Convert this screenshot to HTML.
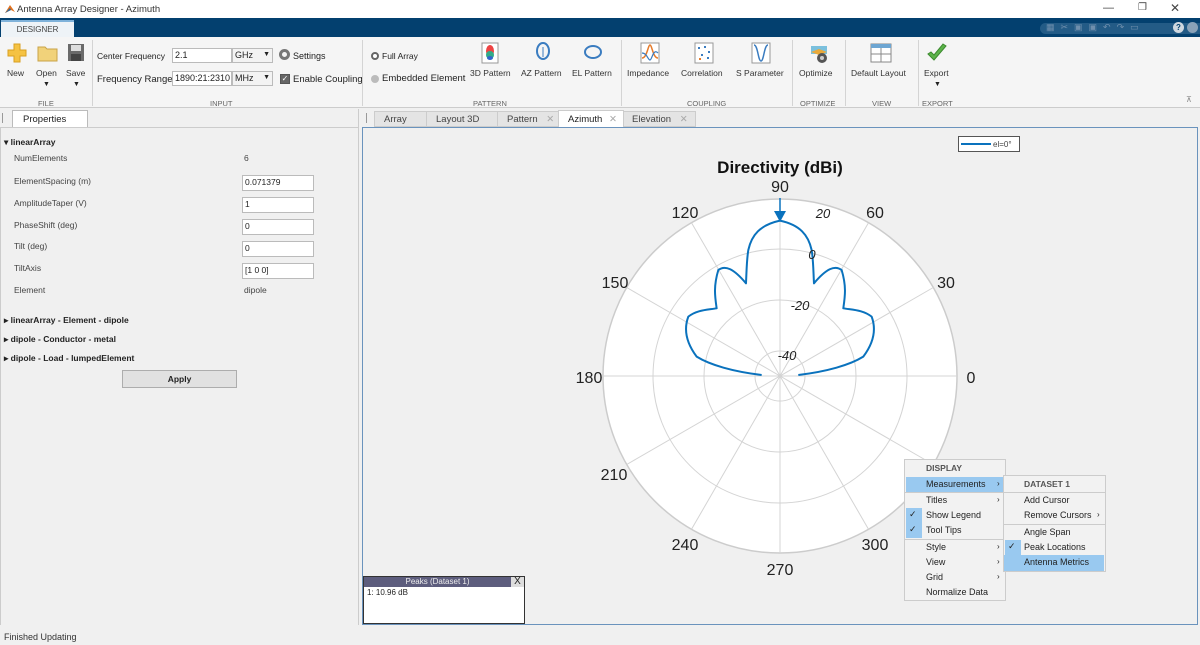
<!DOCTYPE html>
<html><head><meta charset="utf-8"><style>
*{box-sizing:border-box;margin:0;padding:0}
body{width:1200px;height:645px;overflow:hidden;background:#f0f0f0;font-family:"Liberation Sans",sans-serif;font-size:9px;color:#222;position:relative}
.a{position:absolute;white-space:nowrap}
.lbl{font-size:7.5px;color:#666;text-align:center}
.inp{position:absolute;background:#fff;border:1px solid #bbb;font-size:9px;padding:1px 2px;height:15px}
.sep{position:absolute;top:40px;width:1px;height:66px;background:#d4d4d4}
.tb{font-size:8.5px;color:#333;text-align:center}
</style></head><body>
<div class="a" style="left:0;top:0;width:1200px;height:19px;background:#fff"></div>
<svg class="a" style="left:4px;top:3px" width="12" height="12"><path d="M1 10 L6 2 L11 9 L7 7 Z" fill="#e2711d"/><path d="M1 10 L6 5 L7 7Z" fill="#2c6aa0"/></svg>
<div class="a" style="left:17px;top:4px;font-size:9.5px;color:#333">Antenna Array Designer - Azimuth</div>
<div class="a" style="left:1103px;top:2px;font-size:11px;color:#444">—</div>
<div class="a" style="left:1138px;top:2px;font-size:10px;color:#444">❐</div>
<div class="a" style="left:1170px;top:1px;font-size:12px;color:#444">✕</div>
<div class="a" style="left:0;top:18px;width:1200px;height:19px;background:#03406f"></div>
<div class="a" style="left:1px;top:20px;width:73px;height:18px;background:#eef3f7;border-top:2px solid #7fb2da;font-size:8px;color:#444;text-align:center;line-height:15px">DESIGNER</div>
<div class="a" style="left:1040px;top:23px;width:160px;height:11px;background:#235b86;border-radius:6px 0 0 6px"></div>
<div class="a" style="left:1046px;top:22px;font-size:9px;color:#6f8fad;letter-spacing:6px">▦✂▣▣↶↷▭</div>
<div class="a" style="left:1173px;top:22px;width:11px;height:11px;border-radius:50%;background:#cfd8e0;font-size:8px;text-align:center;line-height:11px;color:#03406f;font-weight:bold">?</div>
<div class="a" style="left:1187px;top:22px;width:11px;height:11px;border-radius:50%;background:#8aa2b8"></div>
<div class="a" style="left:0;top:37px;width:1200px;height:71px;background:#f5f5f5;border-bottom:1px solid #ccc"></div>
<svg class="a" style="left:7px;top:43px" width="20" height="20"><path d="M7 1h6v6h6v6h-6v6H7v-6H1V7h6z" fill="#f5c242" stroke="#d9a020"/></svg>
<svg class="a" style="left:37px;top:44px" width="22" height="18"><path d="M1 3h7l2 2h10v12H1z" fill="#f1d27a" stroke="#c9a347"/></svg>
<svg class="a" style="left:67px;top:43px" width="18" height="19"><rect x="1" y="1" width="16" height="17" fill="#6a6a6a"/><rect x="4" y="2" width="10" height="6" fill="#ddd"/><rect x="4" y="11" width="10" height="7" fill="#444"/></svg>
<div class="a tb" style="left:7px;top:68px">New</div>
<div class="a tb" style="left:36px;top:68px">Open</div>
<div class="a tb" style="left:66px;top:68px">Save</div>
<div class="a" style="left:43px;top:81px;font-size:7px">▼</div>
<div class="a" style="left:73px;top:81px;font-size:7px">▼</div>
<div class="a lbl" style="left:38px;top:99px">FILE</div>
<div class="sep" style="left:92px"></div>
<div class="a" style="left:97px;top:51px;font-size:8.5px">Center Frequency</div>
<div class="inp" style="left:172px;top:48px;width:60px">2.1</div>
<div class="inp" style="left:232px;top:48px;width:41px;background:#f3f3f3">GHz <span style="float:right;font-size:7px;margin-top:1px">▼</span></div>
<div class="a" style="left:279px;top:49px;width:11px;height:11px;border-radius:50%;border:3px solid #777"></div>
<div class="a" style="left:293px;top:51px;font-size:9px">Settings</div>
<div class="a" style="left:97px;top:74px;font-size:9.5px">Frequency Range</div>
<div class="inp" style="left:172px;top:71px;width:60px">1890:21:2310</div>
<div class="inp" style="left:232px;top:71px;width:41px;background:#f3f3f3">MHz <span style="float:right;font-size:7px;margin-top:1px">▼</span></div>
<div class="a" style="left:280px;top:74px;width:10px;height:10px;background:#666;border:1px solid #555;color:#fff;font-size:8px;line-height:8px;text-align:center">✓</div>
<div class="a" style="left:293px;top:74px;font-size:9.5px">Enable Coupling</div>
<div class="a lbl" style="left:210px;top:99px">INPUT</div>
<div class="sep" style="left:362px"></div>
<div class="a" style="left:371px;top:52px;width:8px;height:8px;border-radius:50%;border:2px solid #666;background:#fff"></div>
<div class="a" style="left:382px;top:51px;font-size:8.5px">Full Array</div>
<div class="a" style="left:371px;top:75px;width:8px;height:8px;border-radius:50%;background:#bbb"></div>
<div class="a" style="left:382px;top:73px;font-size:9.5px">Embedded Element</div>
<svg class="a" style="left:481px;top:42px" width="18" height="22"><rect x="1" y="1" width="16" height="20" fill="#fff" stroke="#999"/><ellipse cx="9" cy="9" rx="4" ry="6" fill="#e44"/><ellipse cx="9" cy="13" rx="4" ry="4" fill="#3a8"/><ellipse cx="9" cy="16" rx="3" ry="2" fill="#36c"/></svg>
<svg class="a" style="left:533px;top:42px" width="20" height="22"><ellipse cx="10" cy="9" rx="6" ry="8" fill="none" stroke="#3a7cc0" stroke-width="2"/><path d="M10 5 v10" stroke="#3a7cc0"/></svg>
<svg class="a" style="left:582px;top:42px" width="22" height="22"><ellipse cx="11" cy="10" rx="8" ry="6" fill="none" stroke="#3a7cc0" stroke-width="2"/></svg>
<div class="a tb" style="left:470px;top:68px">3D Pattern</div>
<div class="a tb" style="left:521px;top:68px">AZ Pattern</div>
<div class="a tb" style="left:572px;top:68px">EL Pattern</div>
<div class="a lbl" style="left:473px;top:99px">PATTERN</div>
<div class="sep" style="left:621px"></div>
<svg class="a" style="left:640px;top:42px" width="20" height="22"><rect x="1" y="1" width="18" height="20" fill="#fff" stroke="#999"/><path d="M2 16 C7 16 8 3 10 3 S13 16 18 16" stroke="#e57a2a" fill="none" stroke-width="1.5"/><path d="M2 11 C7 11 8 18 10 18 S13 6 18 11" stroke="#3a7cc0" fill="none" stroke-width="1.2"/></svg>
<svg class="a" style="left:694px;top:42px" width="20" height="22"><rect x="1" y="1" width="18" height="20" fill="#fff" stroke="#999"/><g fill="#3a7cc0"><rect x="4" y="5" width="2" height="2"/><rect x="10" y="4" width="2" height="2"/><rect x="14" y="9" width="2" height="2"/><rect x="7" y="12" width="2" height="2"/><rect x="13" y="15" width="2" height="2"/></g><rect x="5" y="16" width="2" height="2" fill="#e57a2a"/></svg>
<svg class="a" style="left:751px;top:42px" width="20" height="22"><rect x="1" y="1" width="18" height="20" fill="#fff" stroke="#999"/><path d="M3 3 C7 3 7 19 10 19 S13 3 17 3" stroke="#3a7cc0" fill="none" stroke-width="1.5"/></svg>
<div class="a tb" style="left:627px;top:68px">Impedance</div>
<div class="a tb" style="left:681px;top:68px">Correlation</div>
<div class="a tb" style="left:736px;top:68px">S Parameter</div>
<div class="a lbl" style="left:687px;top:99px">COUPLING</div>
<div class="sep" style="left:792px"></div>
<svg class="a" style="left:808px;top:43px" width="22" height="22"><rect x="3" y="3" width="16" height="8" fill="#7bc0dd"/><path d="M3 9 l8 -3 l8 3 l-8 3z" fill="#e9a93a"/><circle cx="14" cy="15" r="5" fill="#555"/><circle cx="14" cy="15" r="2" fill="#ccc"/></svg>
<div class="a tb" style="left:799px;top:68px">Optimize</div>
<div class="a lbl" style="left:800px;top:99px">OPTIMIZE</div>
<div class="sep" style="left:845px"></div>
<svg class="a" style="left:870px;top:43px" width="22" height="20"><rect x="1" y="1" width="20" height="18" fill="#fff" stroke="#888"/><rect x="1" y="1" width="20" height="4" fill="#6ea6d2"/><path d="M1 11h20M11 5v14" stroke="#888"/></svg>
<div class="a tb" style="left:851px;top:68px">Default Layout</div>
<div class="a lbl" style="left:872px;top:99px">VIEW</div>
<div class="sep" style="left:918px"></div>
<svg class="a" style="left:926px;top:43px" width="22" height="20"><path d="M2 11 l6 6 l12 -14 l-3 -2 l-9 11 l-3 -3z" fill="#5cb34a" stroke="#3c8a2f"/></svg>
<div class="a tb" style="left:924px;top:68px">Export</div>
<div class="a" style="left:934px;top:81px;font-size:7px">▼</div>
<div class="a lbl" style="left:922px;top:99px">EXPORT</div>
<div class="a" style="left:1186px;top:95px;font-size:8px;color:#888">⊼</div>
<div class="a" style="left:0;top:109px;width:359px;height:516px;background:#f0f0f0;border-right:1px solid #ccc"></div>
<div class="a" style="left:2px;top:113px;width:1px;height:10px;background:#999"></div>
<div class="a" style="left:12px;top:110px;width:76px;height:18px;background:#fff;border:1px solid #bbb;border-bottom:none;font-size:9.5px;padding:3px 0 0 10px">Properties</div>
<div class="a" style="left:0;top:127px;width:358px;height:498px;background:#f0f0f0;border-top:1px solid #ccc;border-left:1px solid #ccc"></div>
<div class="a" style="left:4px;top:137px;font-size:8.5px;font-weight:bold">▾ linearArray</div>
<div class="a" style="left:14px;top:153px;font-size:8.5px;color:#444">NumElements</div>
<div class="a" style="left:244px;top:153px;font-size:8.5px;color:#444">6</div>
<div class="a" style="left:14px;top:176px;font-size:8.5px;color:#444">ElementSpacing (m)</div>
<div class="a" style="left:14px;top:198px;font-size:8.5px;color:#444">AmplitudeTaper (V)</div>
<div class="a" style="left:14px;top:220px;font-size:8.5px;color:#444">PhaseShift (deg)</div>
<div class="a" style="left:14px;top:241px;font-size:8.5px;color:#444">Tilt (deg)</div>
<div class="a" style="left:14px;top:263px;font-size:8.5px;color:#444">TiltAxis</div>
<div class="a" style="left:14px;top:285px;font-size:8.5px;color:#444">Element</div>
<div class="a" style="left:244px;top:285px;font-size:8.5px;color:#444">dipole</div>
<div class="inp" style="left:242px;top:175px;width:72px;height:16px;font-size:8.5px">0.071379</div>
<div class="inp" style="left:242px;top:197px;width:72px;height:16px;font-size:8.5px">1</div>
<div class="inp" style="left:242px;top:219px;width:72px;height:16px;font-size:8.5px">0</div>
<div class="inp" style="left:242px;top:241px;width:72px;height:16px;font-size:8.5px">0</div>
<div class="inp" style="left:242px;top:263px;width:72px;height:16px;font-size:8.5px">[1 0 0]</div>
<div class="a" style="left:4px;top:315px;font-size:8.5px;font-weight:bold">▸ linearArray - Element - dipole</div>
<div class="a" style="left:4px;top:334px;font-size:8.5px;font-weight:bold">▸ dipole - Conductor - metal</div>
<div class="a" style="left:4px;top:353px;font-size:8.5px;font-weight:bold">▸ dipole - Load - lumpedElement</div>
<div class="a" style="left:122px;top:370px;width:115px;height:18px;background:#e1e1e1;border:1px solid #adadad;font-size:8.5px;font-weight:bold;text-align:center;line-height:16px">Apply</div>
<div class="a" style="left:366px;top:113px;width:1px;height:10px;background:#999"></div>
<div class="a" style="left:374px;top:111px;width:322px;height:16px;background:#e4e4e4;border:1px solid #ccc"></div>
<div class="a" style="left:384px;top:114px;font-size:9.5px;color:#444">Array</div>
<div class="a" style="left:426px;top:111px;width:1px;height:16px;background:#ccc"></div>
<div class="a" style="left:436px;top:114px;font-size:9.5px;color:#444">Layout 3D</div>
<div class="a" style="left:497px;top:111px;width:1px;height:16px;background:#ccc"></div>
<div class="a" style="left:507px;top:114px;font-size:9.5px;color:#444">Pattern <span style="color:#aaa;margin-left:6px">✕</span></div>
<div class="a" style="left:558px;top:110px;width:66px;height:18px;background:#fff;border:1px solid #ccc;border-bottom:none;font-size:9.5px;padding:3px 0 0 9px">Azimuth <span style="color:#aaa;margin-left:4px">✕</span></div>
<div class="a" style="left:632px;top:114px;font-size:9.5px;color:#444">Elevation <span style="color:#aaa;margin-left:6px">✕</span></div>
<div class="a" style="left:362px;top:127px;width:836px;height:498px;background:#f0f0f0;border:1px solid #6a93bd"></div>
<svg class="a" style="left:0;top:0" width="1200" height="645">
<g transform="translate(780,376)">
<circle r="177" fill="#fff" stroke="#ccc" stroke-width="1.5"/>
<g fill="none" stroke="#d4d4d4"><circle r="127"/><circle r="76"/><circle r="25"/>
<path d="M-177 0H177M0 -177V177M153.3 -88.5L-153.3 88.5M88.5 -153.3L-88.5 153.3M-153.3 -88.5L153.3 88.5M-88.5 -153.3L88.5 153.3"/></g>
</g>
<g transform="translate(560,130) scale(0.3333)" fill="none" stroke="#0a72bd" stroke-width="6" stroke-linejoin="round">
<path d="M715 735 C800 725 870 705 910 680 C940 640 950 600 935 560 C910 540 880 540 850 535 C855 500 860 470 845 420 C825 405 800 415 762 460 C760 420 760 390 755 360 C745 315 720 285 660 272 C600 285 575 315 565 360 C560 390 560 420 558 460 C520 415 495 405 475 420 C460 470 465 500 470 535 C440 540 410 540 385 560 C370 600 380 640 410 680 C450 705 520 725 605 735"/>
</g>
<path d="M774 211 L786 211 L780 222Z" fill="#0a72bd"/><path d="M780 198V212" stroke="#0a72bd" stroke-width="1.5"/>
<g font-family="Liberation Sans" font-size="16" fill="#222" text-anchor="middle">
<text x="780" y="192">90</text><text x="685" y="218">120</text><text x="875" y="218">60</text>
<text x="615" y="288">150</text><text x="946" y="288">30</text>
<text x="589" y="383">180</text><text x="971" y="383">0</text>
<text x="614" y="480">210</text>
<text x="685" y="550">240</text><text x="875" y="550">300</text><text x="780" y="575">270</text>
</g>
<g font-family="Liberation Sans" font-size="13" fill="#222" font-style="italic" text-anchor="middle">
<text x="823" y="218">20</text><text x="812" y="259">0</text><text x="800" y="310">-20</text><text x="787" y="360">-40</text></g>
<text x="780" y="173" font-family="Liberation Sans" font-size="17" font-weight="bold" text-anchor="middle" fill="#111">Directivity (dBi)</text>
<rect x="958.5" y="136.5" width="61" height="15" fill="#fff" stroke="#555"/>
<path d="M961 144H991" stroke="#0a72bd" stroke-width="2"/>
<text x="993" y="147" font-family="Liberation Sans" font-size="8" fill="#444">el=0°</text>
</svg>
<div class="a" style="left:363px;top:576px;width:162px;height:48px;background:#fff;border:1px solid #333"></div>
<div class="a" style="left:364px;top:577px;width:147px;height:10px;background:#5d5d7d;color:#eee;font-size:8px;text-align:center;line-height:10px">Peaks (Dataset 1)</div>
<div class="a" style="left:511px;top:577px;width:13px;height:10px;background:#ddd;font-size:10px;line-height:10px;text-align:center">X</div>
<div class="a" style="left:367px;top:588px;font-size:8px">1: 10.96 dB</div>
<div class="a" style="left:904px;top:459px;width:102px;height:142px;background:#f2f2f2;border:1px solid #ccc"></div>
<div class="a" style="left:926px;top:463px;font-size:8.5px;font-weight:bold;color:#555">DISPLAY</div>
<div class="a" style="left:906px;top:477px;width:98px;height:15px;background:#99c9f0"></div>
<div class="a" style="left:926px;top:479px;font-size:9px">Measurements</div><div class="a" style="left:997px;top:479px;font-size:8px">›</div>
<div class="a" style="left:905px;top:492px;width:100px;height:1px;background:#ccc"></div>
<div class="a" style="left:926px;top:495px;font-size:9px">Titles</div><div class="a" style="left:997px;top:495px;font-size:8px">›</div>
<div class="a" style="left:906px;top:508px;width:16px;height:30px;background:#99c9f0"></div>
<div class="a" style="left:909px;top:509px;font-size:9px">✓</div>
<div class="a" style="left:909px;top:524px;font-size:9px">✓</div>
<div class="a" style="left:926px;top:510px;font-size:9px">Show Legend</div>
<div class="a" style="left:926px;top:525px;font-size:9px">Tool Tips</div>
<div class="a" style="left:905px;top:539px;width:100px;height:1px;background:#ccc"></div>
<div class="a" style="left:926px;top:542px;font-size:9px">Style</div><div class="a" style="left:997px;top:542px;font-size:8px">›</div>
<div class="a" style="left:926px;top:557px;font-size:9px">View</div><div class="a" style="left:997px;top:557px;font-size:8px">›</div>
<div class="a" style="left:926px;top:572px;font-size:9px">Grid</div><div class="a" style="left:997px;top:572px;font-size:8px">›</div>
<div class="a" style="left:926px;top:587px;font-size:9px">Normalize Data</div>
<div class="a" style="left:1003px;top:475px;width:103px;height:97px;background:#f2f2f2;border:1px solid #ccc"></div>
<div class="a" style="left:1024px;top:479px;font-size:8.5px;font-weight:bold;color:#555">DATASET 1</div>
<div class="a" style="left:1004px;top:492px;width:101px;height:1px;background:#ccc"></div>
<div class="a" style="left:1024px;top:495px;font-size:9px">Add Cursor</div>
<div class="a" style="left:1024px;top:510px;font-size:9px">Remove Cursors</div><div class="a" style="left:1097px;top:510px;font-size:8px">›</div>
<div class="a" style="left:1004px;top:524px;width:101px;height:1px;background:#ccc"></div>
<div class="a" style="left:1024px;top:527px;font-size:9px">Angle Span</div>
<div class="a" style="left:1005px;top:540px;width:16px;height:15px;background:#99c9f0"></div>
<div class="a" style="left:1008px;top:541px;font-size:9px">✓</div>
<div class="a" style="left:1024px;top:542px;font-size:9px">Peak Locations</div>
<div class="a" style="left:1004px;top:555px;width:100px;height:16px;background:#99c9f0"></div>
<div class="a" style="left:1024px;top:557px;font-size:9px">Antenna Metrics</div>
<div class="a" style="left:4px;top:632px;font-size:9px;color:#333">Finished Updating</div>
</body></html>
